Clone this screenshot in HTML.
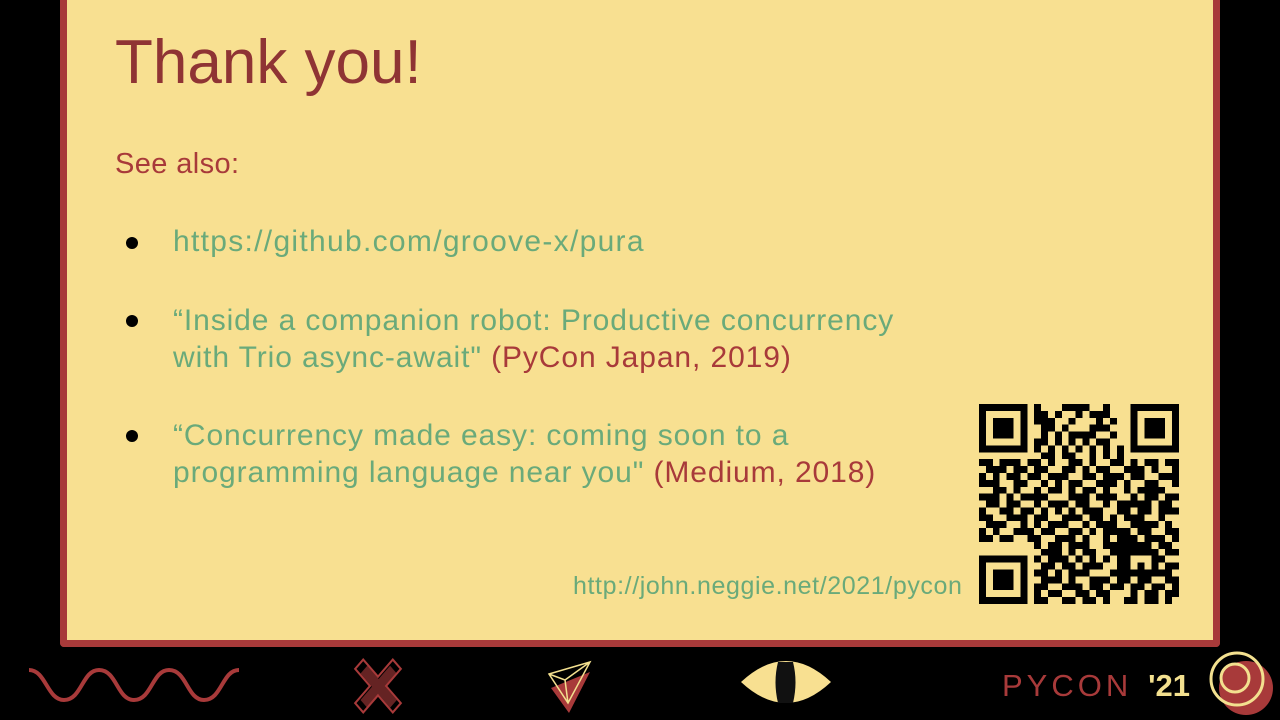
<!DOCTYPE html>
<html><head><meta charset="utf-8"><style>
html,body{margin:0;padding:0;width:1280px;height:720px;background:#000;overflow:hidden;font-family:"Liberation Sans",sans-serif}
.card{position:absolute;left:60px;top:-10px;width:1146px;height:650px;background:#f8e091;border:7px solid #a83a3a;border-top:none;box-sizing:content-box;border-radius:0 0 4px 4px}
.t{position:absolute;white-space:nowrap}
.red{color:#a83a3a}.grn{color:#6aaa7a}
.dot{position:absolute;width:12px;height:12px;border-radius:50%;background:#000}
.b{font-size:30px;letter-spacing:0.9px}
</style></head><body>
<div class="card"></div>
<div class="t" style="left:115px;top:27px;font-size:62px;color:#8f3434">Thank you!</div>
<div class="t red" style="left:115px;top:148px;font-size:29px;letter-spacing:0.4px">See also:</div>
<div class="dot" style="left:126px;top:237px"></div>
<div class="dot" style="left:126px;top:315px"></div>
<div class="dot" style="left:126px;top:430px"></div>
<div class="t grn b" style="left:173px;top:225px;letter-spacing:1.3px">https://github.com/groove-x/pura</div>
<div class="t grn b" style="left:173px;top:302px;line-height:37px">“Inside a companion robot: Productive concurrency<br>with Trio async-await" <span class="red">(PyCon Japan, 2019)</span></div>
<div class="t grn b" style="left:173px;top:417px;line-height:37px">“Concurrency made easy: coming soon to a<br>programming language near you" <span class="red">(Medium, 2018)</span></div>
<div class="t grn" style="left:573px;top:572px;font-size:25px;letter-spacing:0.6px">http://john.neggie.net/2021/pycon</div>
<svg id="qr" style="position:absolute;left:979px;top:404px" width="200" height="200" viewBox="0 0 29 29" shape-rendering="crispEdges"></svg>
<script>
var rows=[
"11111110100011110010001111111",
"10000010110100101110001000001",
"10111010111001000101001011101",
"10111010011010001110001011101",
"10111010010101111001001011101",
"10000010110101010110001000001",
"11111110101010101010101111111",
"00000000011011001010100000000",
"11011101101001101001101011011",
"01110110110011010110011101001",
"10101101101110011011101100111",
"11100110010101100111010011001",
"00110100101101011010010111100",
"11101011110001110111001011011",
"01101100101110110010111110110",
"10011011010101011100110110111",
"11001110110011101101011100100",
"01110010101110010111001111010",
"10100111011001101011110110011",
"11011001100111010010111011101",
"00000000101101110011111110110",
"00000000011101011001111111011",
"11111110101110101010110001100",
"10000010011011011100110101011",
"10111010110101110001111111110",
"10111010011101001110110110011",
"10111010110011101101101101101",
"10000010101100110110001011011",
"11111110110011011010011011010"];
var s="";for(var r=0;r<29;r++)for(var c=0;c<29;c++)if(rows[r][c]=="1")s+="M"+c+" "+r+"h1v1h-1z";
document.getElementById("qr").innerHTML='<path d="'+s+'" fill="#000"/>';
</script>
<svg style="position:absolute;left:0;top:648px" width="1280" height="72" viewBox="0 648 1280 72">
<path d="M29 670 C46 670,47 700,64 700 C82 700,82 670,99 670 C117 670,117 700,134 700 C152 700,152 670,169 670 C187 670,187 700,204 700 C222 700,222 670,239 670" fill="none" stroke="#a83a3a" stroke-width="4"/>
<g transform="translate(378 686) scale(0.95 1.1) rotate(45)">
<path d="M-6 -28h12v22h22v12h-22v22h-12v-22h-22v-12h22z" fill="none" stroke="#a83a3a" stroke-width="2"/>
<path d="M-4 -22h10v17h17v10h-17v17h-10v-17h-17v-10h17z" fill="#a83a3a" opacity="0.6"/>
</g>
<path d="M551 688 L590 672 L569 713 Z" fill="#a83a3a"/>
<path d="M549 674 L590 662 L568 703 Z M549 674 L565 680 L590 662 M565 680 L568 703" fill="none" stroke="#f3e08f" stroke-width="1.5"/>
<path d="M741 682 Q786 640 831 682 Q786 724 741 682 Z" fill="#f8e091"/>
<path d="M778 662 Q773 682 778 703 L793 703 Q798 682 793 662 Z" fill="#111"/>
<text x="1002" y="696" font-family="Liberation Sans,sans-serif" font-size="31" fill="#a83a3a" letter-spacing="4">PYCON</text>
<text x="1190" y="696" text-anchor="end" font-family="Liberation Sans,sans-serif" font-size="31" font-weight="bold" fill="#f3e08f">'21</text>
<circle cx="1246" cy="688" r="27" fill="#a83a3a"/>
<circle cx="1237" cy="679" r="26" fill="none" stroke="#f3e08f" stroke-width="3"/>
<circle cx="1235" cy="678" r="14" fill="#a83a3a" stroke="#f3e08f" stroke-width="3"/>
</svg>
</body></html>
